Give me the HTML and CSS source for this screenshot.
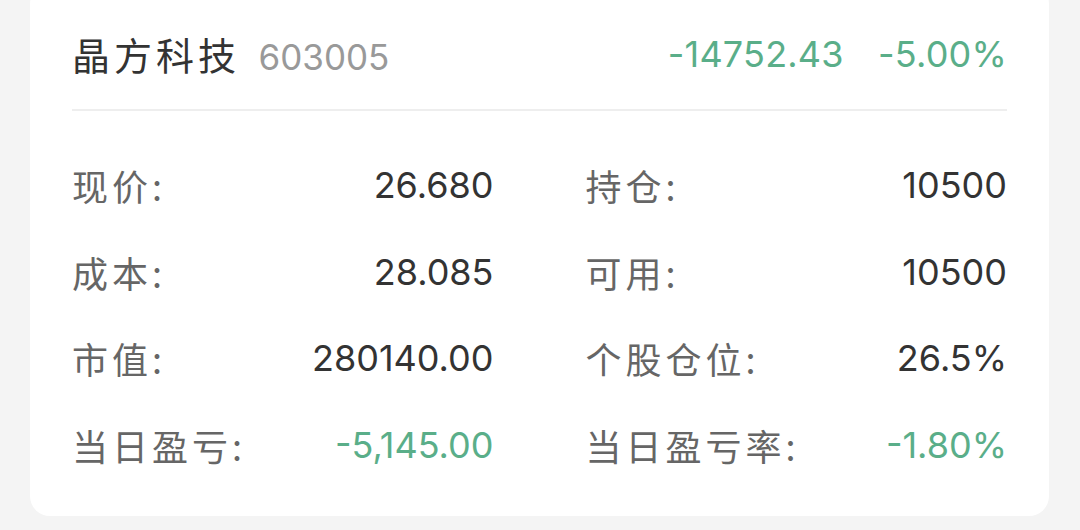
FILE: index.html
```html
<!DOCTYPE html>
<html lang="zh-CN">
<head>
    <meta charset="UTF-8">
    <meta name="viewport" content="width=device-width, initial-scale=1.0">
    <title>持仓详情</title>
    <link rel="stylesheet" href="styles.css">
</head>
<body>

    <div class="position-card">
        <div class="card-header">
            <div class="stock-name">
                <span class="name">晶方科技</span>
                <span class="code">603005</span>
            </div>
            <div class="stock-change">
                <span class="down">-14752.43</span>
                <span class="down">-5.00%</span>
            </div>
        </div>

        <div class="card-body">
            <div class="item">
                <span class="label">现价:</span>
                <span class="value">26.680</span>
            </div>
            <div class="item">
                <span class="label">持仓:</span>
                <span class="value">10500</span>
            </div>
            <div class="item">
                <span class="label">成本:</span>
                <span class="value">28.085</span>
            </div>
            <div class="item">
                <span class="label">可用:</span>
                <span class="value">10500</span>
            </div>
            <div class="item">
                <span class="label">市值:</span>
                <span class="value">280140.00</span>
            </div>
            <div class="item">
                <span class="label">个股仓位:</span>
                <span class="value">26.5%</span>
            </div>
            <div class="item">
                <span class="label">当日盈亏:</span>
                <span class="value down">-5,145.00</span>
            </div>
            <div class="item">
                <span class="label">当日盈亏率:</span>
                <span class="value down">-1.80%</span>
            </div>
        </div>
    </div>

</body>
</html>
```

FILE: styles.css
```css
body {
    margin: 0;
    background-color: #f4f4f4;
    font-family: Inter, "Noto Sans CJK SC", sans-serif;
}
.position-card {
    margin: -16px 0 0 30px;
    width: 1019px;
    background-color: #fff;
    border-radius: 20px;
    padding: 0 42px;
    box-sizing: border-box;
}
.card-header {
    height: 127px;
    padding-top: 14px;
    box-sizing: border-box;
    display: flex;
    align-items: center;
    justify-content: space-between;
    border-bottom: 2px solid #eeeeee;
}
.stock-name .name {
    font-family: "Noto Sans CJK SC", sans-serif;
    font-size: 38px;
    letter-spacing: 4px;
    color: #333;
}
.stock-name .code {
    margin-left: 14px;
    font-size: 35px;
    color: #999;
}
.stock-change {
    font-size: 36px;
    letter-spacing: 0.2px;
}
.stock-change span {
    margin-left: 24px;
}
.down {
    color: #5aae89;
}
.card-body {
    display: grid;
    grid-template-columns: 1fr 1fr;
    column-gap: 92px;
    padding: 31px 0 28px;
}
.item {
    height: 86.5px;
    display: flex;
    align-items: center;
    justify-content: space-between;
}
.label {
    font-family: "Noto Sans CJK SC", sans-serif;
    font-size: 36px;
    letter-spacing: 4px;
    color: #666;
}
.value {
    font-size: 36px;
    color: #333;
}
.value.down {
    color: #5aae89;
}
```
